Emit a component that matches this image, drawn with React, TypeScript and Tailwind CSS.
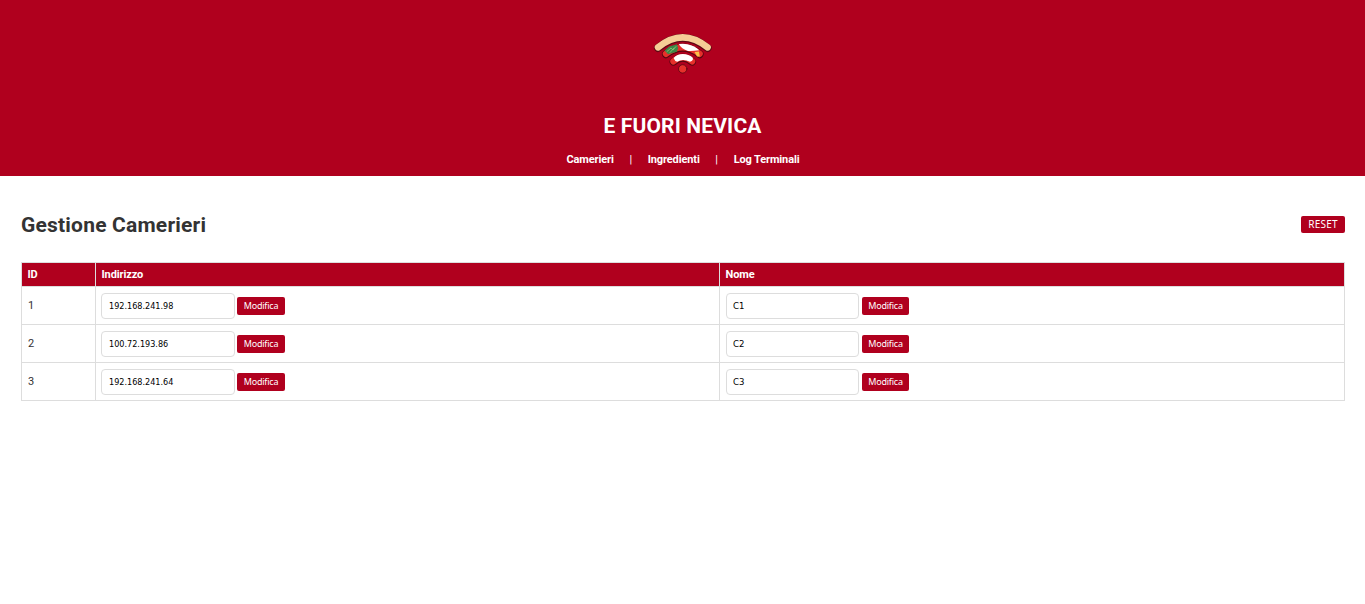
import React from 'react';

const rows = [
  { id: 1, address: '192.168.241.98', name: 'C1' },
  { id: 2, address: '100.72.193.86', name: 'C2' },
  { id: 3, address: '192.168.241.64', name: 'C3' },
];

const links = ['Camerieri', 'Ingredienti', 'Log Terminali'];

function Logo() {
  return (
    <svg width="80" height="60" viewBox="0 0 80 60" fill="none" strokeLinecap="round" aria-hidden="true">
      <path d="M15 26Q39.7 5.8 64.6 26" stroke="#5e0815" strokeWidth="8" />
      <path d="M15 25.4Q39.7 5.4 64.6 25.4" stroke="#f6cd96" strokeWidth="6.5" />
      <path d="M23 32.2Q39.8 19.2 56.6 32.2" stroke="#560610" strokeWidth="8" />
      <path d="M23 31.8Q39.8 18.8 56.6 31.8" stroke="#e6302b" strokeWidth="6.4" />
      <path d="M21.6 28.4L26 24.6L33.8 22.3L35.2 26L33.8 29.8L25 32.3Z" fill="#3d8747" />
      <path d="M24 29.5L28 26L30 28L33 24.5M27 30.5L31 26" stroke="#8fc57a" strokeWidth=".8" />
      <path d="M35.8 22.1Q40 21.4 44.5 22.2Q52 23.8 56.2 28.3Q49 29.2 45 28.9Q38.5 27.4 35.8 22.1Z" fill="#fff" />
      <path d="M51.5 30L56 29.4L56.8 34.6L54 34.4Z" fill="#fbc048" />
      <path d="M30.4 39.8Q39.8 31.6 49.2 39.8" stroke="#560610" strokeWidth="7.6" />
      <path d="M30.4 39.4Q39.8 31.2 49.2 39.4" stroke="#e6302b" strokeWidth="6.2" />
      <path d="M30.6 35.9Q34 32.1 39.8 32.1Q46 32.1 49.6 35.6Q51 38.6 47 39.8Q39.8 36.4 34.2 39.8Q32 39.5 30.6 35.9Z" fill="#fff" />
      <circle cx="39.7" cy="46.9" r="4.2" fill="#e6302b" stroke="#560610" strokeWidth=".8" />
    </svg>
  );
}

function Field({ value, label, inputClass, buttonClass }: { value: string; label: string; inputClass: string; buttonClass: string }) {
  return (
    <div className="flex h-[37px] items-center">
      <input
        aria-label={label}
        defaultValue={value}
        className={`h-[26px] rounded-[4px] border border-[#ddd] bg-white font-['DejaVu_Sans_Condensed','DejaVu_Sans',sans-serif] text-black ${inputClass}`}
      />
      <button
        className={`h-[18px] rounded-[2px] bg-[#b0001e] font-['Noto_Sans',sans-serif] text-[9px] leading-[18px] tracking-[-0.2px] text-white ${buttonClass}`}
      >
        Modifica
      </button>
    </div>
  );
}

export default function App() {
  return (
    <div className="min-h-screen bg-white font-[Roboto,sans-serif] text-[#333]">
      <header className="flex h-[176px] flex-col items-center bg-[#b0001e] pt-[22px] text-white">
        <Logo />
        <h1 className="mt-[31px] text-[21px] leading-[26px] font-bold tracking-[0.15px]">E FUORI NEVICA</h1>
        <nav className="mt-[14px] flex pl-px text-[11px] leading-[14px]">
          {links.map((link, i) => (
            <React.Fragment key={link}>
              {i > 0 && <span className="w-[34px] text-center">|</span>}
              <a href="#" className="font-bold tracking-[-0.13px]">{link}</a>
            </React.Fragment>
          ))}
        </nav>
      </header>
      <main className="pr-5 pl-[21px]">
        <div className="flex h-[86px] items-center justify-between pt-[11px]">
          <h2 className="text-[21px] leading-[26px] font-bold tracking-[0.2px]">Gestione Camerieri</h2>
          <button className="h-[17px] w-11 rounded-[2px] bg-[#b0001e] font-['Noto_Sans',sans-serif] text-[10px] leading-[17px] tracking-[0.2px] text-white">
            RESET
          </button>
        </div>
        <table className="w-full table-fixed border-collapse border border-[#ddd] text-[11px]">
          <colgroup>
            <col className="w-[74px]" />
            <col className="w-[624px]" />
            <col />
          </colgroup>
          <thead>
            <tr className="h-6 bg-[#b0001e] text-left text-white">
              {['ID', 'Indirizzo', 'Nome'].map((heading) => (
                <th key={heading} className="border border-[#ddd] p-0 pl-[5.5px] leading-[23px] font-bold tracking-[-0.12px]">{heading}</th>
              ))}
            </tr>
          </thead>
          <tbody>
            {rows.map((row) => (
              <tr key={row.id} className="h-[38px]">
                <td className="border border-[#ddd] p-0 pt-[2px] pl-[6px]">{row.id}</td>
                <td className="border border-[#ddd] p-0">
                  <Field value={row.address} label="Indirizzo" inputClass="ml-[5px] w-[134px] px-[7px] text-[9px]" buttonClass="ml-[2px] w-12" />
                </td>
                <td className="border border-[#ddd] p-0">
                  <Field value={row.name} label="Nome" inputClass="ml-[6px] w-[133px] px-[6px] text-[9.5px]" buttonClass="ml-[3px] w-[47px]" />
                </td>
              </tr>
            ))}
          </tbody>
        </table>
      </main>
    </div>
  );
}
